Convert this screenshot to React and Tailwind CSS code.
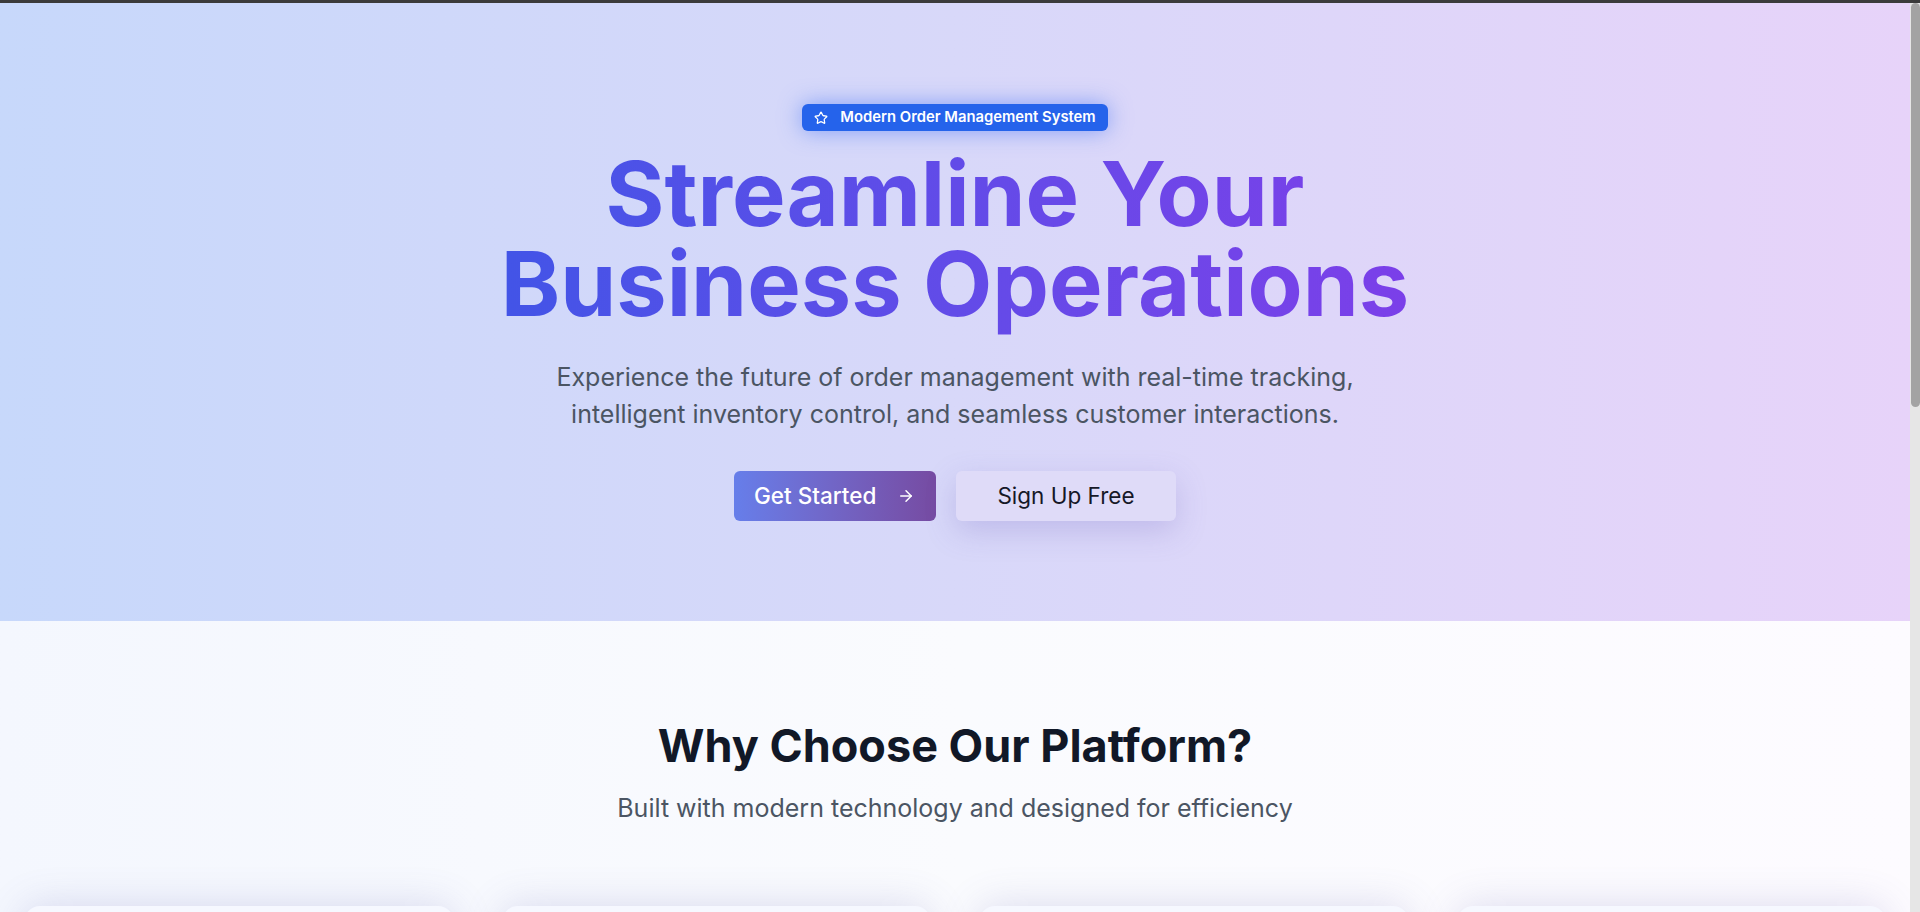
import React from "react";
import { Star, ArrowRight } from "lucide-react";

const features = [0, 1, 2, 3];

export default function App() {
  return (
    <div
      className="h-[912px] w-[1920px] overflow-hidden flex flex-col bg-white"
      style={{ fontFamily: "Inter, 'Noto Sans', 'Liberation Sans', sans-serif" }}
    >
      <div className="h-[3px] w-full bg-[#3b3b3b] shrink-0" />
      <div className="flex flex-1 min-h-0">
        <main className="flex-1 min-w-0 overflow-hidden">
          {/* Hero */}
          <section className="h-[618px] bg-gradient-to-r from-[#c7d8fb] via-[#d8d8f9] to-[#e7d3f9] flex flex-col items-center pt-[101px]">
            <div className="h-[27px] flex items-center gap-3 px-3 rounded-md bg-[#2563eb] text-white text-[14.8px] font-semibold shadow-[0_0_22px_rgba(59,110,246,0.55)]">
              <Star size={14} strokeWidth={2.2} />
              <span>Modern Order Management System</span>
            </div>
            <h1 className="mt-[18px] text-center font-bold text-[90px] leading-[90px]">
              <span className="inline-block bg-gradient-to-r from-[#4254e7] to-[#7b3fe9] bg-clip-text text-transparent pb-3">
                Streamline Your
                <br />
                Business Operations
              </span>
            </h1>
            <p className="mt-[18px] text-center text-[25px] leading-[37px] text-[#4b5563]">
              Experience the future of order management with real-time tracking,
              <br />
              intelligent inventory control, and seamless customer interactions.
            </p>
            <div className="mt-[38px] flex gap-5">
              <button className="h-[50px] w-[202px] flex items-center justify-between pl-[20px] pr-[21px] rounded-md bg-gradient-to-r from-[#667eea] to-[#764ba2] text-white text-[22.5px] font-medium">
                <span>Get Started</span>
                <ArrowRight size={18} strokeWidth={2} />
              </button>
              <button className="h-[50px] w-[220px] flex items-center justify-center rounded-md bg-[#dfdbf8] text-[#161827] text-[22.5px] font-normal shadow-[0_10px_30px_rgba(110,100,190,0.25)]">
                Sign Up Free
              </button>
            </div>
          </section>

          {/* Features */}
          <section className="bg-gradient-to-r from-[#f4f7fe] via-[#fafbfe] to-[#fdfbff] pt-[99px] px-6">
            <h2 className="text-center font-bold text-[45px] leading-[52px] text-[#111827]">
              Why Choose Our Platform?
            </h2>
            <p className="mt-[20px] text-center text-[25px] leading-[32px] text-[#4b5563]">
              Built with modern technology and designed for efficiency
            </p>
            <div className="mt-[82px] grid grid-cols-4 gap-12">
              {features.map((i) => (
                <div
                  key={i}
                  className="h-[300px] rounded-2xl bg-[#f6f8ff] shadow-[0_0_40px_rgba(90,90,170,0.2)]"
                />
              ))}
            </div>
          </section>
        </main>
        <div className="w-[10px] shrink-0 bg-[#e6e6e6] flex flex-col">
          <div className="h-[404px] w-[9px] ml-[0.5px] rounded-full bg-[#a3a3a3]" />
        </div>
      </div>
    </div>
  );
}
